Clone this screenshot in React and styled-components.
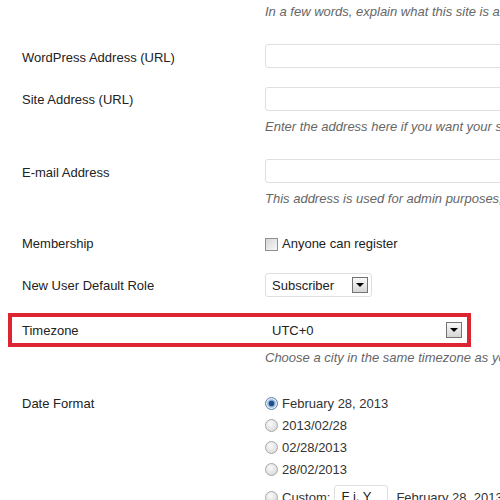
import React from "react"
import styled, { createGlobalStyle } from "styled-components"

const GlobalStyle = createGlobalStyle`
  html, body {
    margin: 0;
    padding: 0;
    background: #fff;
  }
  body {
    font-family: "Liberation Sans", Arial, sans-serif;
    font-size: 13px;
    color: #222;
  }
`

const Page = styled.div`
  width: 500px;
  height: 500px;
  overflow: hidden;
  padding-left: 22px;
  box-sizing: border-box;
`

const Row = styled.div`
  display: grid;
  grid-template-columns: 243px 1fr;
  align-items: start;
  margin-top: ${(p) => p.$top || 0}px;
  width: 700px;
`

const Highlight = styled.div`
  display: grid;
  grid-template-columns: 243px 1fr;
  align-items: center;
  margin: ${(p) => p.$top || 0}px 0 0 -14px;
  width: 463px;
  box-sizing: border-box;
  border: 4px solid #dc2530;
  padding: 1px 1px 1px 10px;
`

/* the label box stays as tall as its field; $shift nudges the text down */
const Label = styled.div`
  height: ${(p) => p.$h || 24}px;
  box-sizing: border-box;
  padding-top: ${(p) => (p.$shift ?? 1) * 2}px;
  line-height: ${(p) => (p.$h || 24) - (p.$shift ?? 1) * 2}px;
  color: #222;
  white-space: nowrap;
`

const Field = styled.div`
  display: flex;
  flex-direction: column;
  align-items: flex-start;
`

const TextInput = styled.div`
  width: 330px;
  height: 24px;
  box-sizing: border-box;
  border: 1px solid #dfdfdf;
  border-radius: 3px;
  background: #fff;
`

const Desc = styled.div`
  margin-top: ${(p) => p.$top || 0}px;
  line-height: 20px;
  font-style: italic;
  color: #666;
  white-space: nowrap;
`

const Select = styled.div`
  display: flex;
  align-items: center;
  justify-content: space-between;
  width: ${(p) => p.$width}px;
  height: 24px;
  box-sizing: border-box;
  border: 1px solid ${(p) => (p.$plain ? "transparent" : "#dfdfdf")};
  border-radius: 3px;
  padding: 0 3px 0 6px;
  background: #fff;
  color: #222;
`

const DropButton = styled.span`
  display: flex;
  align-items: center;
  justify-content: center;
  width: 16px;
  height: 16px;
  box-sizing: border-box;
  border: 1px solid #747474;
  background: linear-gradient(#f8f8f8, #d6d6d6);

  &::after {
    content: "";
    border-left: 4px solid transparent;
    border-right: 4px solid transparent;
    border-top: 4px solid #000;
  }
`

const CheckLine = styled.label`
  display: flex;
  align-items: center;
  gap: 4px;
  line-height: 24px;
  color: #222;
`

const Checkbox = styled.span`
  width: 13px;
  height: 13px;
  box-sizing: border-box;
  border: 1px solid #8e8f8f;
  background: linear-gradient(135deg, #d6d6d6, #f7f7f7);
`

const Options = styled.div`
  display: flex;
  flex-direction: column;
`

const Option = styled.label`
  display: flex;
  align-items: center;
  gap: 4px;
  height: ${(p) => p.$h || 22}px;
  margin-top: ${(p) => p.$top || 0}px;
  color: #333;
  white-space: nowrap;
`

const Radio = styled.span`
  width: 13px;
  height: 13px;
  box-sizing: border-box;
  border-radius: 50%;
  border: 1px solid ${(p) => (p.$checked ? "#5a7ea8" : "#a8a8a8")};
  background: ${(p) =>
    p.$checked
      ? "radial-gradient(circle, #1d4f8c 0 2.5px, #7fa3cc 3px, #e6eef7 5px)"
      : "radial-gradient(circle at 40% 35%, #fafafa, #d2d2d2)"};
`

const SmallInput = styled.div`
  width: 54px;
  height: 24px;
  box-sizing: border-box;
  border: 1px solid #dfdfdf;
  border-radius: 3px;
  padding: 0 6px;
  line-height: 22px;
  color: #222;
  margin-right: 4px;
`

const dateOptions = ["February 28, 2013", "2013/02/28", "02/28/2013", "28/02/2013"]

const App = () => {
  return (
    <Page>
      <GlobalStyle />
      <Row $top={2}>
        <span />
        <Field>
          <Desc>In a few words, explain what this site is about.</Desc>
        </Field>
      </Row>

      <Row $top={22}>
        <Label $shift={2}>WordPress Address (URL)</Label>
        <Field>
          <TextInput />
        </Field>
      </Row>

      <Row $top={19}>
        <Label>Site Address (URL)</Label>
        <Field>
          <TextInput />
          <Desc $top={6}>
            Enter the address here if you want your site homepage to be different from the directory you installed WordPress.
          </Desc>
        </Field>
      </Row>

      <Row $top={22}>
        <Label $shift={2}>E-mail Address</Label>
        <Field>
          <TextInput />
          <Desc $top={6}>This address is used for admin purposes, like new user notification.</Desc>
        </Field>
      </Row>

      <Row $top={23}>
        <Label $shift={0}>Membership</Label>
        <Field>
          <CheckLine>
            <Checkbox />
            Anyone can register
          </CheckLine>
        </Field>
      </Row>

      <Row $top={17}>
        <Label>New User Default Role</Label>
        <Field>
          <Select $width={107}>
            Subscriber
            <DropButton />
          </Select>
        </Field>
      </Row>

      <Highlight $top={16}>
        <Label>Timezone</Label>
        <Select $width={201} $plain>
          UTC+0
          <DropButton />
        </Select>
      </Highlight>

      <Row $top={1}>
        <span />
        <Field>
          <Desc>Choose a city in the same timezone as you.</Desc>
        </Field>
      </Row>

      <Row $top={24}>
        <Label $h={22} $shift={0.5}>Date Format</Label>
        <Options>
          {dateOptions.map((d, i) => (
            <Option key={d}>
              <Radio $checked={i === 0} />
              {d}
            </Option>
          ))}
          <Option $h={28} $top={3}>
            <Radio />
            Custom:
            <SmallInput>F j, Y</SmallInput>
            February 28, 2013
          </Option>
        </Options>
      </Row>
    </Page>
  )
}

export default App
